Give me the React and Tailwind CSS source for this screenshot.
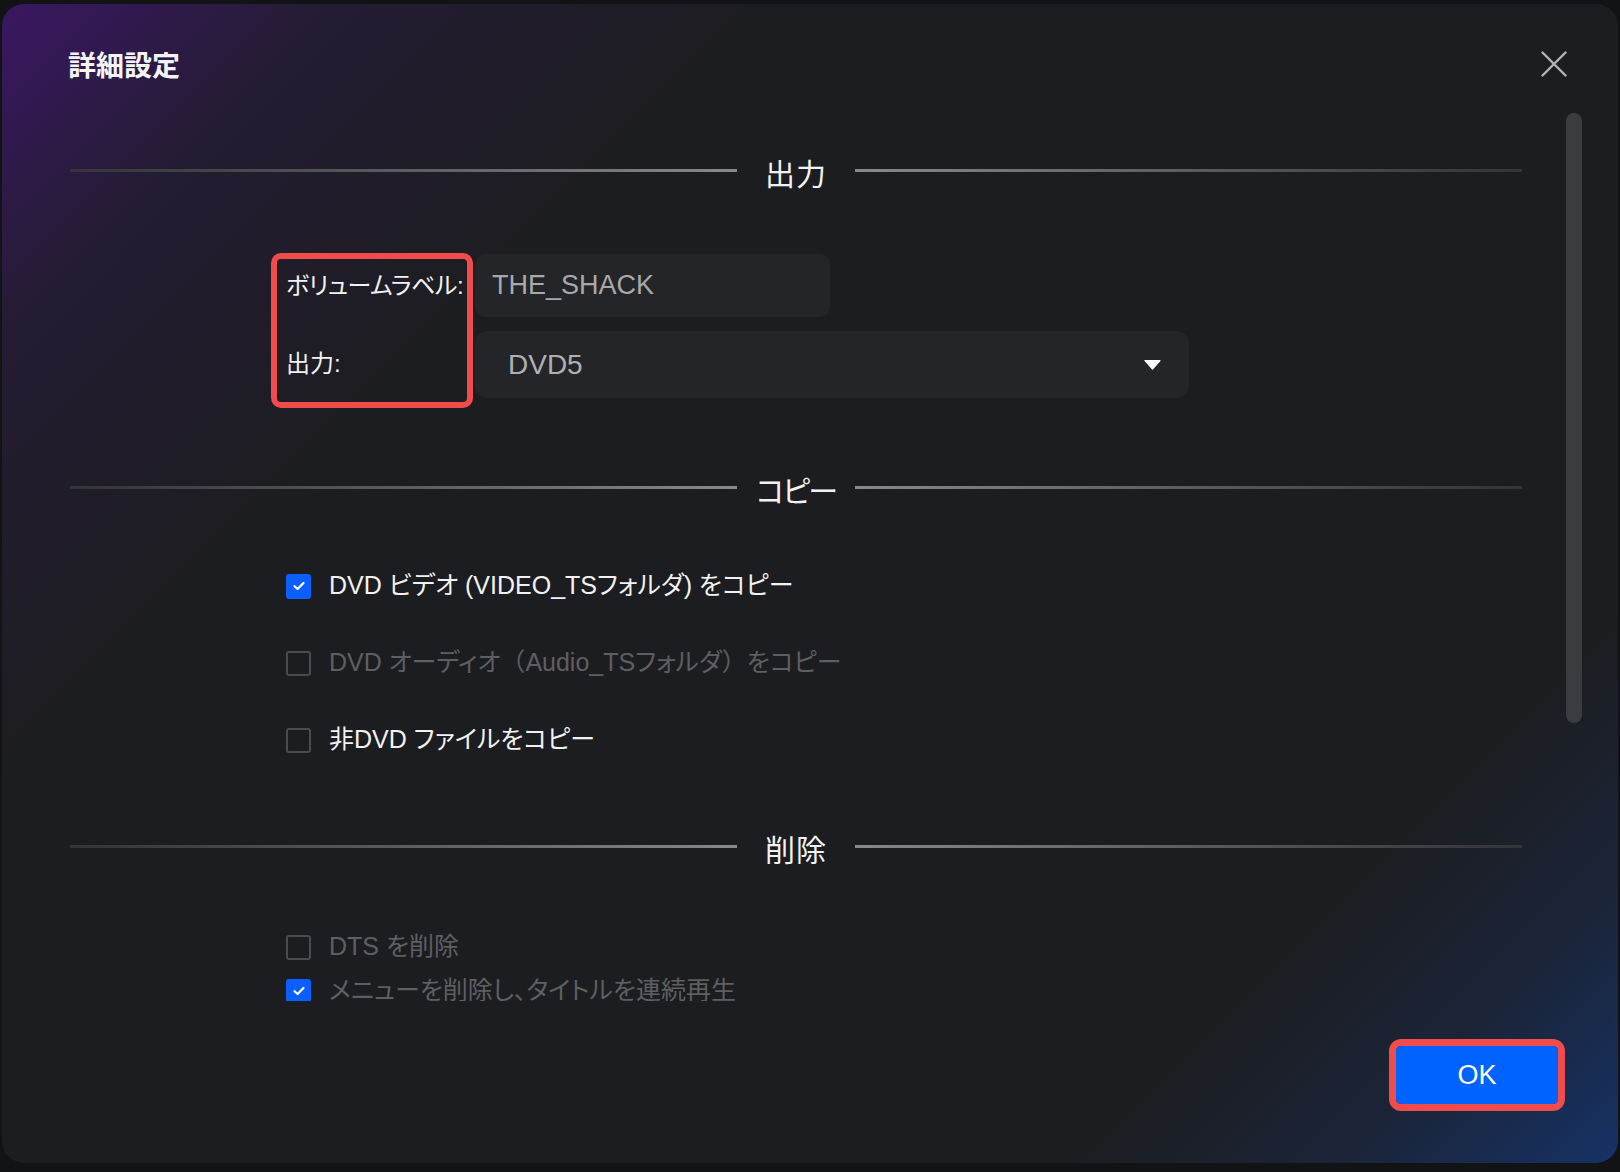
import React from 'react';

const SectionHeading = ({ title, tight }) => (
  <div className="flex h-[40px] items-center">
    <div className="h-[3px] flex-1 bg-linear-to-r from-[#333437] to-[#88898c]" />
    <div
      className={
        tight
          ? 'mt-[10px] w-[118px] text-center text-[30px] leading-[40px] tracking-[-2px] text-[#f2f2f2]'
          : 'mt-[10px] w-[118px] text-center text-[30px] leading-[40px] tracking-[1px] text-[#f2f2f2]'
      }
    >
      {title}
    </div>
    <div className="h-[3px] flex-1 bg-linear-to-l from-[#333437] to-[#88898c]" />
  </div>
);

const Checkbox = ({ checked, disabled, children }) => (
  <div className="flex h-[40px] items-center">
    {checked ? (
      <span className="flex h-[25px] w-[25px] shrink-0 items-center justify-center rounded-[3px] bg-[#0b5fff]">
        <svg width="16" height="16" viewBox="0 0 16 16" fill="none">
          <path d="M3.5 8.2 L6.6 11 L12.5 5" stroke="#ffffff" strokeWidth="2.2" strokeLinecap="round" strokeLinejoin="round" />
        </svg>
      </span>
    ) : (
      <span className="h-[25px] w-[25px] shrink-0 rounded-[3px] border-2 border-[#4a4b4e]" />
    )}
    <span className={disabled ? 'ml-[18px] whitespace-nowrap text-[25px] text-[#5e5f62]' : 'ml-[18px] whitespace-nowrap text-[25px] text-[#f2f2f2]'}>
      {children}
    </span>
  </div>
);

export default function App() {
  return (
    <div className="h-[1172px] w-[1620px] overflow-hidden bg-[#121315] pl-[2px] pt-[4px] font-['Liberation_Sans','Noto_Sans_CJK_JP',sans-serif] [font-feature-settings:'palt']">
      <div className="flex h-[1159px] w-[1616px] flex-col rounded-[22px] bg-[#1c1d20] bg-[linear-gradient(135deg,#3a1762_0%,#241c33_12%,#1c1d20_28%,#1c1d20_80%,#1b2438_90%,#163266_100%)]">
        {/* header */}
        <div className="flex h-[109px] items-start justify-between pl-[66px] pr-[51px] pt-[43px]">
          <h1 className="text-[28px] font-bold leading-[40px] text-[#f4f4f4]">詳細設定</h1>
          <button className="mt-[4px] flex h-[26px] w-[26px] items-center justify-center">
            <svg width="26" height="26" viewBox="0 0 26 26" fill="none">
              <path d="M1.5 1.5 L24.5 24.5 M24.5 1.5 L1.5 24.5" stroke="#b4b4b6" strokeWidth="2.4" strokeLinecap="round" />
            </svg>
          </button>
        </div>

        {/* body */}
        <div className="flex h-[888px] overflow-hidden">
          <div className="ml-[68px] w-[1452px] shrink-0">
            <div className="mt-[37px]">
              <SectionHeading title="出力" />
            </div>

            <div className="ml-[201px] mt-[63px] flex items-start">
              <div className="flex h-[155px] w-[202px] shrink-0 flex-col rounded-[10px] border-[6px] border-[#ef4c4b] pl-[9px] pt-[12px] text-[24px] leading-[30px] text-[#f2f2f2]">
                <div className="whitespace-nowrap tracking-[-0.5px]">ボリュームラベル:</div>
                <div className="mt-[48px] whitespace-nowrap">出力:</div>
              </div>
              <div className="ml-[2px] flex flex-col gap-[14px] pt-[1px]">
                <div className="flex h-[63px] w-[355px] items-center rounded-[10px] bg-[#242528] pl-[17px] text-[27px] text-[#a9a9ab]">
                  THE_SHACK
                </div>
                <div className="flex h-[67px] w-[714px] items-center justify-between rounded-[12px] bg-[#242528] pl-[33px] pr-[28px] text-[28px] text-[#b0b0b2]">
                  <span>DVD5</span>
                  <svg width="17" height="11" viewBox="0 0 17 11">
                    <path d="M1 1.5 H16 L8.5 10 Z" fill="#ffffff" stroke="#ffffff" strokeWidth="1.2" strokeLinejoin="round" />
                  </svg>
                </div>
              </div>
            </div>

            <div className="mt-[59px]">
              <SectionHeading title="コピー" tight />
            </div>

            <div className="ml-[216px] mt-[59px] flex flex-col gap-[37px]">
              <Checkbox checked>DVD ビデオ (VIDEO_TSフォルダ) をコピー</Checkbox>
              <Checkbox disabled>
                DVD オーディオ<span className="[font-feature-settings:normal]">（</span>Audio_TSフォルダ
                <span className="[font-feature-settings:normal]">）</span>をコピー
              </Checkbox>
              <Checkbox>非DVD ファイルをコピー</Checkbox>
            </div>

            <div className="mt-[66px]">
              <SectionHeading title="削除" />
            </div>

            <div className="ml-[216px] mt-[61px] flex flex-col gap-[4px]">
              <Checkbox disabled>DTS を削除</Checkbox>
              <Checkbox checked disabled>メニューを削除し、タイトルを連続再生</Checkbox>
            </div>
          </div>

          {/* scrollbar */}
          <div className="ml-[44px] w-[16px] shrink-0">
            <div className="h-[610px] w-[16px] rounded-full bg-[#3b3c3f]" />
          </div>
        </div>

        {/* footer */}
        <div className="flex flex-1 items-start justify-end pr-[53px] pt-[38px]">
          <div className="rounded-[12px] border-[7px] border-[#ef4c4b]">
            <button className="flex h-[58px] w-[162px] items-center justify-center rounded-[5px] bg-[#0062ff] text-[27px] text-white">
              OK
            </button>
          </div>
        </div>
      </div>
    </div>
  );
}
